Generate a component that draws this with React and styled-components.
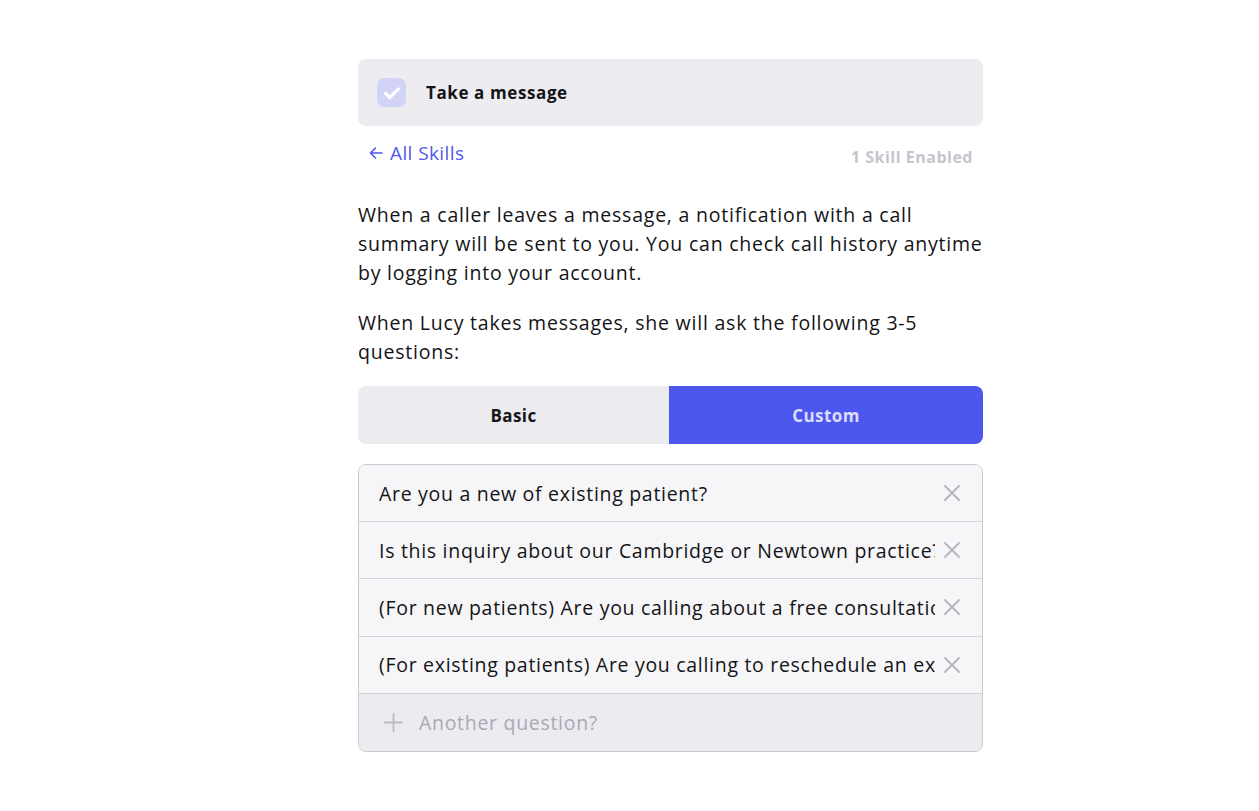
import React, { useState } from "react";
import styled, { createGlobalStyle } from "styled-components";

const GlobalStyle = createGlobalStyle`
  body {
    margin: 0;
    background: #ffffff;
    font-family: "Open Sans", "Liberation Sans", sans-serif;
    color: #111114;
  }
`;

const Page = styled.div`
  width: 625px;
  margin-left: 358px;
  padding-top: 59px;
  padding-bottom: 40px;
`;

const SkillCard = styled.div`
  display: flex;
  align-items: center;
  gap: 20px;
  height: 67px;
  padding: 0 19px;
  background: #ededf1;
  border-radius: 8px;
`;

const CheckBox = styled.div`
  width: 29px;
  height: 29px;
  border-radius: 7px;
  background: #d3d3f6;
  display: flex;
  align-items: center;
  justify-content: center;
`;

const SkillTitle = styled.span`
  font-size: 17px;
  font-weight: 700;
  letter-spacing: 0.6px;
  color: #141416;
`;

const NavRow = styled.div`
  display: flex;
  justify-content: space-between;
  align-items: center;
  height: 56px;
  padding: 0 10px 0 10px;
`;

const BackLink = styled.a`
  display: flex;
  align-items: center;
  gap: 6px;
  font-size: 19px;
  letter-spacing: 0.4px;
  color: #4f58ef;
  text-decoration: none;
  margin-top: -2px;
`;

const EnabledCount = styled.span`
  font-size: 16px;
  font-weight: 700;
  letter-spacing: 0.5px;
  color: #c5c5cd;
  margin-top: 6px;
`;

const Paragraph = styled.p`
  margin: 18px 0 0;
  font-size: 19.5px;
  letter-spacing: 0.78px;
  line-height: 29px;
  color: #141416;
  & + & {
    margin-top: 21px;
  }
`;

const Toggle = styled.div`
  display: grid;
  grid-template-columns: 311px 1fr;
  height: 58px;
  margin-top: 20px;
  border-radius: 8px;
  overflow: hidden;
  background: #ececf0;
`;

const ToggleButton = styled.button`
  border: none;
  font-family: inherit;
  font-size: 17px;
  font-weight: 700;
  letter-spacing: 0.4px;
  cursor: pointer;
  background: ${(p) => (p.$active ? "#4c57ee" : "#ececf0")};
  color: ${(p) => (p.$active ? "#dcdcfd" : "#161618")};
`;

const QuestionList = styled.div`
  margin-top: 20px;
  border: 1px solid #c9c9ce;
  border-radius: 8px;
  overflow: hidden;
`;

const QuestionRow = styled.div`
  display: flex;
  align-items: center;
  height: 57.2px;
  padding: 0 20px 0 20px;
  box-sizing: border-box;
  background: ${(p) => (p.$add ? "#ececf0" : "#f6f6f8")};
  border-bottom: ${(p) => (p.$last ? "none" : "1px solid #d3d3d8")};
`;

const QuestionInput = styled.input`
  flex: 1;
  min-width: 0;
  border: none;
  background: transparent;
  font-family: inherit;
  font-size: 19.5px;
  letter-spacing: 0.7px;
  color: #141416;
  padding: 0;
  outline: none;
  &::placeholder {
    color: #a9a9b2;
  }
`;

const IconButton = styled.button`
  border: none;
  background: transparent;
  padding: 0;
  margin-left: 7px;
  width: 20px;
  height: 20px;
  display: flex;
  align-items: center;
  justify-content: center;
  cursor: pointer;
`;

const PlusIcon = styled.span`
  display: flex;
  margin: 0 16px 0 5px;
`;

const Check = () => (
  <svg width="22" height="22" viewBox="0 0 24 24" fill="none">
    <path d="M5 12.5l4.5 4.5L19 7.5" stroke="#ffffff" strokeWidth="3.4" strokeLinecap="round" strokeLinejoin="round" />
  </svg>
);

const ArrowLeft = () => (
  <svg width="16" height="16" viewBox="0 0 16 16" fill="none">
    <path d="M14 8H2.5M7.5 3L2.5 8l5 5" stroke="#4f58ef" strokeWidth="1.6" strokeLinecap="round" strokeLinejoin="round" />
  </svg>
);

const Cross = () => (
  <svg width="18" height="18" viewBox="0 0 18 18" fill="none">
    <path d="M2 2l14 14M16 2L2 16" stroke="#b4b4bc" strokeWidth="1.8" strokeLinecap="round" />
  </svg>
);

const Plus = () => (
  <svg width="19" height="19" viewBox="0 0 19 19" fill="none">
    <path d="M9.5 1v17M1 9.5h17" stroke="#b9b9c2" strokeWidth="1.8" strokeLinecap="round" />
  </svg>
);

const initialQuestions = [
  "Are you a new of existing patient?",
  "Is this inquiry about our Cambridge or Newtown practice?",
  "(For new patients) Are you calling about a free consultation?",
  "(For existing patients) Are you calling to reschedule an existing appointment?",
];

export default function App() {
  const [mode, setMode] = useState("custom");
  const [questions, setQuestions] = useState(initialQuestions);

  const onQuestionChange = (i, value) => {
    setQuestions(questions.map((q, idx) => (idx === i ? value : q)));
  };

  const removeQuestion = (i) => {
    setQuestions(questions.filter((_, idx) => idx !== i));
  };

  return (
    <>
      <GlobalStyle />
      <Page>
        <SkillCard>
          <CheckBox>
            <Check />
          </CheckBox>
          <SkillTitle>Take a message</SkillTitle>
        </SkillCard>

        <NavRow>
          <BackLink href="#">
            <ArrowLeft />
            All Skills
          </BackLink>
          <EnabledCount>1 Skill Enabled</EnabledCount>
        </NavRow>

        <Paragraph>
          When a caller leaves a message, a notification with a call summary will be sent to you.
          You can check call history anytime by logging into your account.
        </Paragraph>
        <Paragraph>
          When Lucy takes messages, she will ask the following 3-5 questions:
        </Paragraph>

        <Toggle>
          <ToggleButton $active={mode === "basic"} onClick={() => setMode("basic")}>
            Basic
          </ToggleButton>
          <ToggleButton $active={mode === "custom"} onClick={() => setMode("custom")}>
            Custom
          </ToggleButton>
        </Toggle>

        <QuestionList>
          {questions.map((q, i) => (
            <QuestionRow key={i}>
              <QuestionInput value={q} onChange={(e) => onQuestionChange(i, e.target.value)} />
              <IconButton onClick={() => removeQuestion(i)}>
                <Cross />
              </IconButton>
            </QuestionRow>
          ))}
          <QuestionRow $add $last>
            <PlusIcon>
              <Plus />
            </PlusIcon>
            <QuestionInput placeholder="Another question?" />
          </QuestionRow>
        </QuestionList>
      </Page>
    </>
  );
}
